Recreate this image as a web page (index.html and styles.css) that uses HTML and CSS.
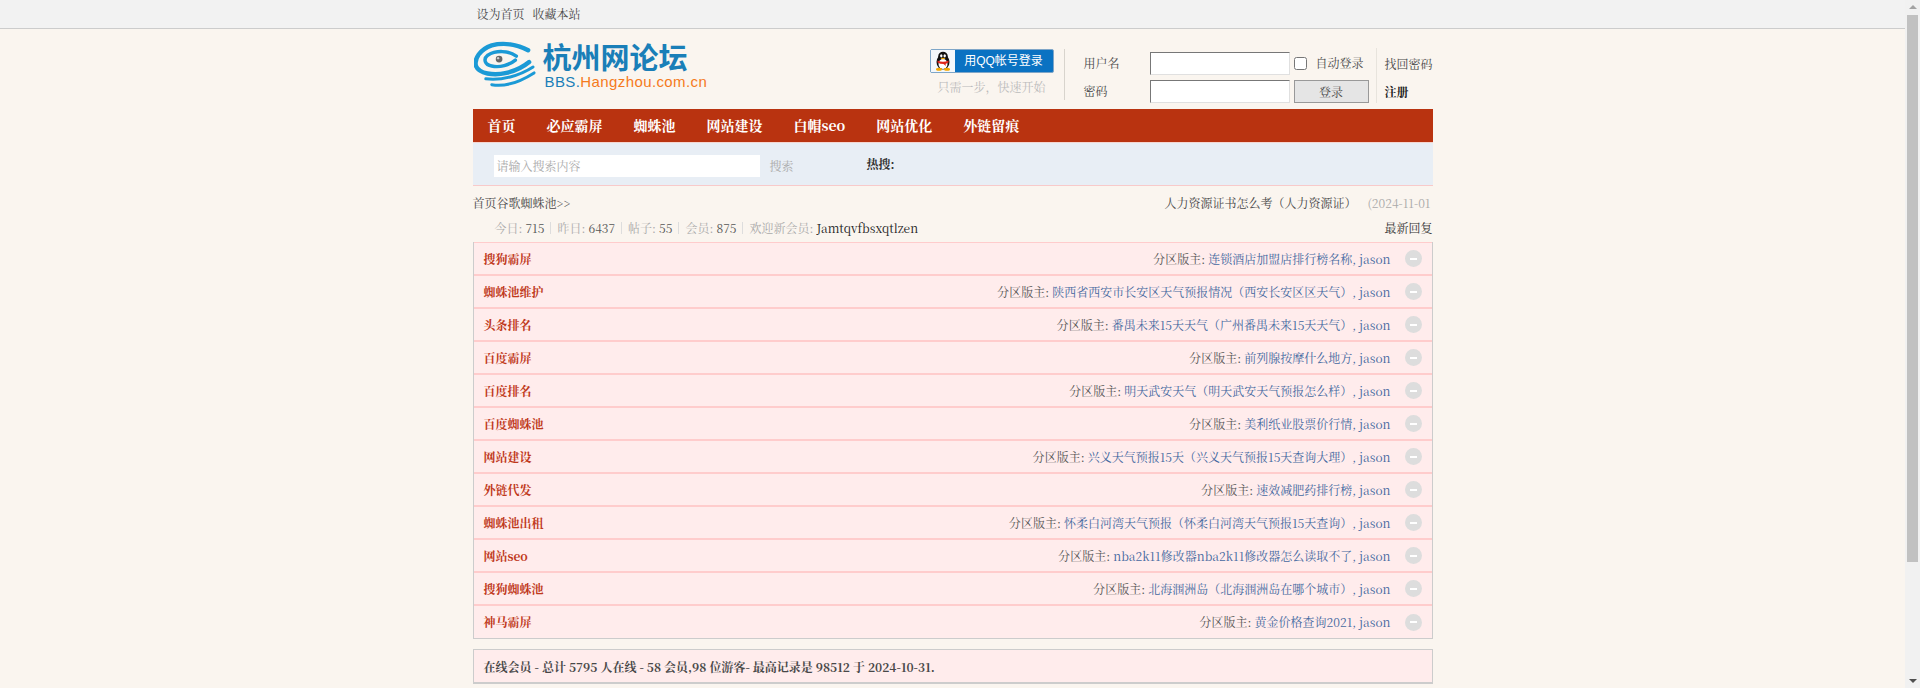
FILE: index.html
```html
<!DOCTYPE html>
<html lang="zh-CN">
<head>
<meta charset="utf-8">
<title>杭州网论坛</title>
<link rel="stylesheet" href="styles.css">
</head>
<body>
<div class="topbar"><div class="wrap topbar-in"><a>设为首页</a><a>收藏本站</a></div></div>
<div class="wrap">
  <header class="header">
    <div class="logo">
      <svg class="logo-mark" width="63" height="50" viewBox="0 0 64 50">
        <g fill="none" stroke="#1b9ad6" stroke-linecap="round">
          <path d="M55 9C44 3 30 1 18 4C6 8 0 18 2 25C5 33 20 35 33 32C42 30 50 26 56 21" stroke-width="4.500"/>
          <path d="M43 15C35 9 22 9 14 14C9 18 11 24 18 25C26 27 36 24 42 19" stroke-width="3.500"/>
          <path d="M12 38C28 40 46 35 60 26" stroke-width="3"/>
          <path d="M18 44C34 47 50 39 61 32" stroke-width="3"/>
        </g>
        <circle cx="25.500" cy="18" r="3.400" fill="#666"/>
        <circle cx="24.500" cy="17" r="1.200" fill="#ccc"/>
      </svg>
      <div class="logo-text">
        <div class="logo-cn">杭州网论坛</div>
        <div class="logo-en">BBS.<span>Hangzhou.com.cn</span></div>
      </div>
    </div>
    <div class="qq">
      <div class="qq-btn">
        <span class="qq-icon">
          <svg width="18" height="20" viewBox="0 0 18 20">
            <ellipse cx="9" cy="11" rx="6.500" ry="7.500" fill="#111"/>
            <circle cx="9" cy="5.500" r="4.800" fill="#111"/>
            <ellipse cx="9" cy="13" rx="4.500" ry="5" fill="#fff"/>
            <ellipse cx="7.300" cy="4.800" rx="1.200" ry="1.600" fill="#fff"/>
            <ellipse cx="10.700" cy="4.800" rx="1.200" ry="1.600" fill="#fff"/>
            <path d="M6.500 7.300Q9 6 11.500 7.300Q9 9 6.500 7.300Z" fill="#f5a800"/>
            <path d="M3.500 9.500Q9 12 14.500 9.500L14.500 11.500Q12 12.500 11.500 13L12 15L9.500 13Q6 13 3.500 11.500Z" fill="#e0261b"/>
            <ellipse cx="5" cy="18.300" rx="3" ry="1.500" fill="#f5a800"/>
            <ellipse cx="13" cy="18.300" rx="3" ry="1.500" fill="#f5a800"/>
          </svg>
        </span>
        <span class="qq-label">用QQ帐号登录</span>
      </div>
      <div class="qq-tip">只需一步，快速开始</div>
    </div>
    <form class="login">
      <div class="login-row">
        <label class="login-label">用户名</label>
        <input class="login-input" type="text">
        <span class="auto"><input class="check" type="checkbox"><span>自动登录</span></span>
      </div>
      <div class="login-row">
        <label class="login-label">密码</label>
        <input class="login-input" type="password">
        <button class="login-btn" type="button">登录</button>
      </div>
    </form>
    <div class="login-links">
      <a>找回密码</a>
      <a class="register">注册</a>
    </div>
  </header>

  <nav class="nav">
    <a>首页</a><a>必应霸屏</a><a>蜘蛛池</a><a>网站建设</a><a>白帽seo</a><a>网站优化</a><a>外链留痕</a>
  </nav>

  <div class="search">
    <div class="search-box">请输入搜索内容</div>
    <span class="search-btn">搜索</span>
    <b class="hot">热搜:</b>
  </div>

  <div class="crumb">
    <span>首页谷歌蜘蛛池&gt;&gt;</span>
    <span class="news"><span class="news-title">人力资源证书怎么考（人力资源证）</span><span class="news-date">(2024-11-01</span></span>
  </div>

  <div class="stats">
    <div class="stats-list">
      <span class="stat">今日: <em>715</em></span><i></i>
      <span class="stat">昨日: <em>6437</em></span><i></i>
      <span class="stat">帖子: <em>55</em></span><i></i>
      <span class="stat">会员: <em>875</em></span><i></i>
      <span class="stat">欢迎新会员: <em class="newbie">Jamtqvfbsxqtlzen</em></span>
    </div>
    <a class="latest">最新回复</a>
  </div>

  <section class="board">
    <div class="row"><b>搜狗霸屏</b><span class="mod">分区版主: <a>连锁酒店加盟店排行榜名称, jason</a></span><span class="fold"></span></div>
    <div class="row"><b>蜘蛛池维护</b><span class="mod">分区版主: <a>陕西省西安市长安区天气预报情况（西安长安区区天气）, jason</a></span><span class="fold"></span></div>
    <div class="row"><b>头条排名</b><span class="mod">分区版主: <a>番禺未来15天天气（广州番禺未来15天天气）, jason</a></span><span class="fold"></span></div>
    <div class="row"><b>百度霸屏</b><span class="mod">分区版主: <a>前列腺按摩什么地方, jason</a></span><span class="fold"></span></div>
    <div class="row"><b>百度排名</b><span class="mod">分区版主: <a>明天武安天气（明天武安天气预报怎么样）, jason</a></span><span class="fold"></span></div>
    <div class="row"><b>百度蜘蛛池</b><span class="mod">分区版主: <a>美利纸业股票价行情, jason</a></span><span class="fold"></span></div>
    <div class="row"><b>网站建设</b><span class="mod">分区版主: <a>兴义天气预报15天（兴义天气预报15天查询大理）, jason</a></span><span class="fold"></span></div>
    <div class="row"><b>外链代发</b><span class="mod">分区版主: <a>速效减肥药排行榜, jason</a></span><span class="fold"></span></div>
    <div class="row"><b>蜘蛛池出租</b><span class="mod">分区版主: <a>怀柔白河湾天气预报（怀柔白河湾天气预报15天查询）, jason</a></span><span class="fold"></span></div>
    <div class="row"><b>网站seo</b><span class="mod">分区版主: <a>nba2k11修改器nba2k11修改器怎么读取不了, jason</a></span><span class="fold"></span></div>
    <div class="row"><b>搜狗蜘蛛池</b><span class="mod">分区版主: <a>北海涠洲岛（北海涠洲岛在哪个城市）, jason</a></span><span class="fold"></span></div>
    <div class="row"><b>神马霸屏</b><span class="mod">分区版主: <a>黄金价格查询2021, jason</a></span><span class="fold"></span></div>
  </section>

  <section class="online">在线会员 - 总计 5795 人在线 - 58 会员,98 位游客- 最高记录是 98512 于 2024-10-31.</section>
  <div class="page-end"></div>
</div>
<div class="scrollbar">
  <span class="arrow-up"></span>
  <span class="thumb"></span>
  <span class="arrow-down"></span>
</div>
</body>
</html>
```
FILE: styles.css
```css
* { box-sizing: border-box; }
html::-webkit-scrollbar { display: none; }
body {
  margin: 0;
  padding-right: 15px;
  background: #faf5ef;
  color: #484848;
  font: 12px/1.5 "Noto Serif CJK SC", "Liberation Serif", serif;
}
a { color: inherit; text-decoration: none; }
em, i { font-style: normal; }
.wrap { width: 960px; margin: 0 auto; }

.scrollbar { position: fixed; top: 0; right: 0; bottom: 0; width: 15px; background: #f1f1f1; display: flex; flex-direction: column; align-items: center; }
.arrow-up { flex: none; width: 0; height: 0; margin: 5px 0 6px; border: 4px solid transparent; border-top: 0; border-bottom-color: #a3a3a3; }
.thumb { flex: none; width: 11px; height: 547px; background: #c1c1c1; }
.arrow-down { flex: none; width: 0; height: 0; margin-top: auto; margin-bottom: 5px; border: 4px solid transparent; border-bottom: 0; border-top-color: #505050; }

.topbar { height: 29px; background: #f2f2f2; border-bottom: 1px solid #ccc; }
.topbar-in { display: flex; gap: 8px; padding-left: 4px; line-height: 28px; }

.header { height: 80px; display: flex; }
.logo { width: 457px; display: flex; padding-top: 11px; }
.logo-mark { flex: none; margin: 1px 0 0 1px; }
.logo-text { margin-left: 6px; font-family: "Liberation Sans", "Noto Sans CJK SC", sans-serif; }
.logo-cn { font: 700 29px/32px "Noto Sans CJK SC", sans-serif; color: #1a7fb8; }
.logo-en { margin: 2px 0 0 2px; font-size: 15px; line-height: 16px; letter-spacing: .4px; color: #1a7fb8; }
.logo-en span { color: #f57a1c; }

.qq { width: 134px; padding-top: 20px; }
.qq-btn { width: 124px; height: 24px; display: flex; border: 1px solid #7fa6c8; border-radius: 2px; background: #0a72c2; }
.qq-icon { width: 24px; display: flex; align-items: center; justify-content: center; background: #f4f8fb; }
.qq-label { flex: 1; color: #fff; text-align: center; line-height: 22px; font-family: "Liberation Sans", "Noto Sans CJK SC", sans-serif; }
.qq-tip { margin: 5px 0 0 8px; color: #bbb; line-height: 18px; }

.login { width: 312px; height: 51px; margin-top: 20px; border-left: 1px solid #d8d4cd; padding: 3px 0 0 19px; }
.login-row { height: 23px; margin-bottom: 5px; display: flex; align-items: center; }
.login-label { width: 66px; margin-top: -1px; }
.login-input { width: 140px; height: 23px; margin: 0; border: 1px solid; border-color: #777 #e0e0e0 #e0e0e0 #777; background: #fff; }
.auto { display: flex; align-items: center; margin-top: -1px; }
.check { width: 13px; height: 13px; margin: 0 9px 0 4px; }
.login-btn { width: 75px; height: 23px; margin: 0 0 0 4px; padding: 0; background: #e5e5e5; border: 1px solid #999; color: #484848; font: inherit; }
.login-links { width: 57px; height: 55px; margin-top: 19px; border-left: 1px solid #e8e4dd; padding: 4px 0 0 8px; display: flex; flex-direction: column; }
.login-links a { line-height: 23px; margin-bottom: 5px; }
.login-links .register { color: #222; font-weight: 700; }

.nav { height: 33px; background: #b93310; display: flex; padding-left: 15px; gap: 31px; }
.nav a { color: #fff; font-size: 14px; font-weight: 700; line-height: 33px; }

.search { height: 44px; background: #e8eef5; border-top: 1px solid #f5d5d0; border-bottom: 1px solid #f8caca; display: flex; align-items: center; padding-left: 21px; }
.search-box { width: 266px; height: 22px; margin-top: 4px; line-height: 22px; padding-left: 3px; background: #fff; color: #aaa; }
.search-btn { margin: 4px 0 0 10px; color: #aaa; }
.hot { margin-left: 73px; color: #333; }

.crumb { height: 30px; display: flex; justify-content: space-between; align-items: center; padding-top: 4px; }
.news { display: flex; margin-right: 2px; }
.news-date { margin-left: 11px; color: #aaa; }

.stats { height: 26px; padding-bottom: 2px; display: flex; justify-content: space-between; align-items: center; }
.stats-list { display: flex; align-items: center; padding-left: 22px; color: #aaa; white-space: pre; }
.stats-list em { color: #555; }
.stats-list i { width: 1px; height: 12px; margin: 0 6px; background: #ddd; }
.stats-list .newbie { color: #222; }
.latest { color: #333; }

.board { border: 1px solid #ccc; border-top: 0; }
.row { height: 33px; display: flex; align-items: center; background: #ffecec; border-top: 1px solid #fcc; border-bottom: 1px solid #fcc; padding: 0 10px; }
.row:last-child { border-bottom: 0; }
.row b { color: #c0391b; }
.mod { margin-left: auto; color: #555; }
.mod a { color: #4468a0; }
.fold { width: 17px; height: 17px; margin-left: 14px; border-radius: 50%; background: #ddd; display: flex; align-items: center; justify-content: center; }
.fold::before { content: ""; width: 7px; height: 2px; background: #fff; }

.online { height: 35px; margin-top: 10px; border: 1px solid #ccc; border-bottom-width: 2px; background: #ffecec; padding-left: 10px; line-height: 34px; font-weight: 700; }
.page-end { height: 145px; }
```
